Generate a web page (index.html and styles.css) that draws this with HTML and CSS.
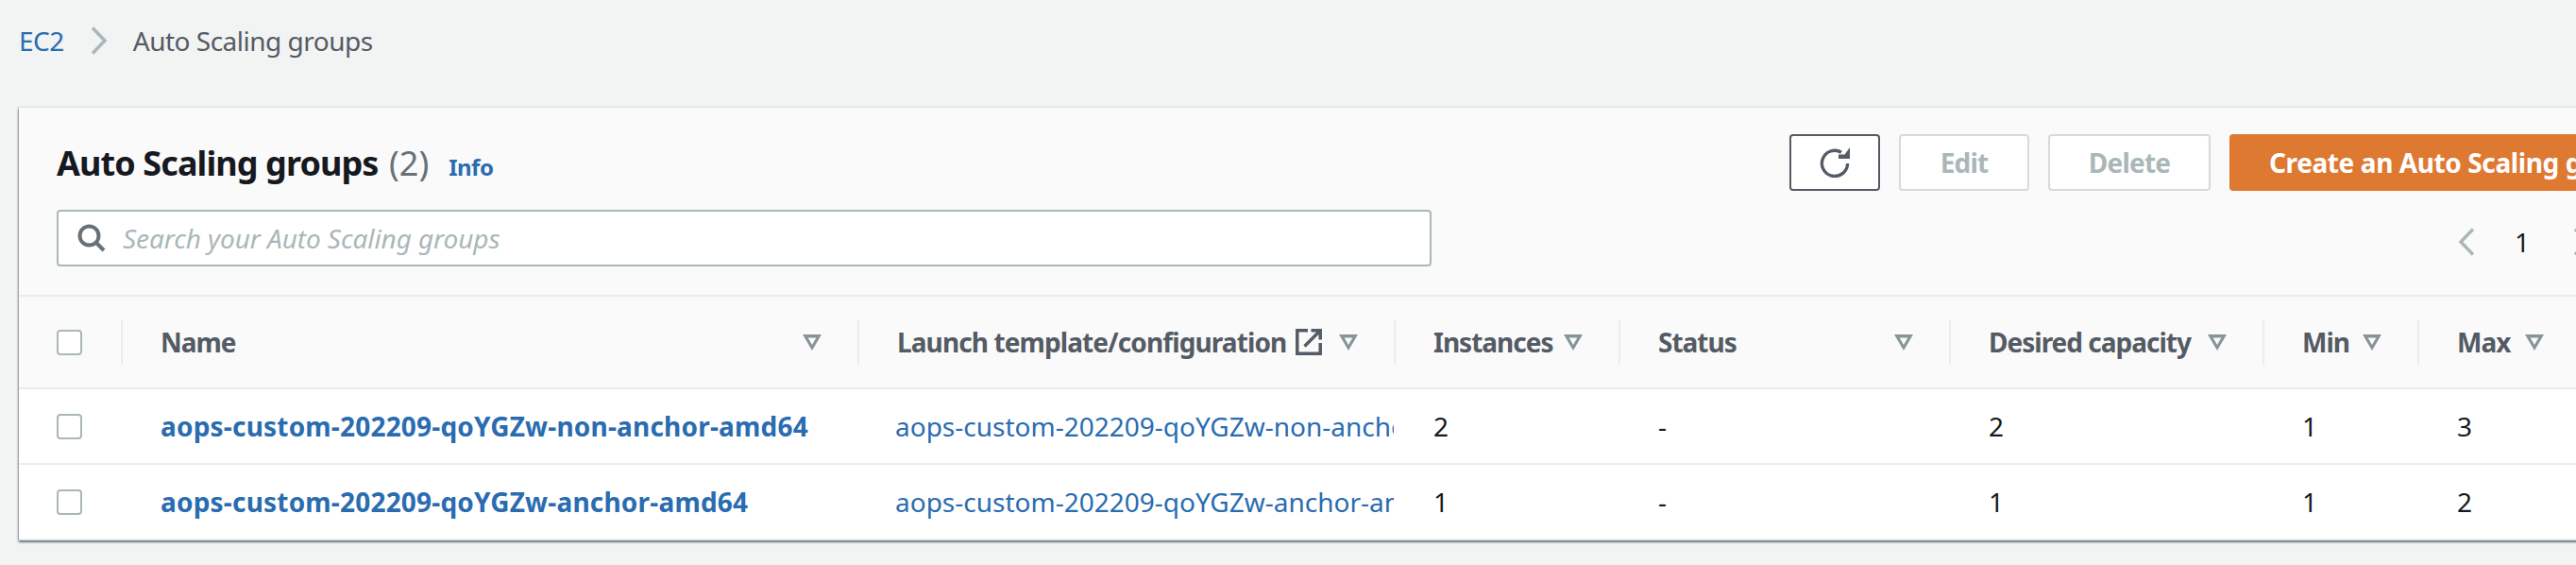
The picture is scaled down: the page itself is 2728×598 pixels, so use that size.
FILE: index.html

```html
<!DOCTYPE html>
<html>
<head>
  <title>Auto Scaling groups</title>
  <link rel="stylesheet" href="styles.css">
</head>
<body>
  <nav class="crumbs">
    <a href="#">EC2</a>
    <svg class="crumb-sep" width="18" height="30" viewBox="0 0 18 30"><path d="M2 1.5 15 15 2 28.5" fill="none" stroke="#aab7b8" stroke-width="3.5"/></svg>
    <span>Auto Scaling groups</span>
  </nav>

  <section class="panel">
    <div class="panel-head">
      <div class="head-left">
        <div class="title-row">
          <h1>Auto Scaling groups <span class="count">(2)</span></h1>
          <a class="info" href="#">Info</a>
        </div>
        <div class="search">
          <svg width="30" height="30" viewBox="0 0 30 30"><circle cx="12.5" cy="12.5" r="10" fill="none" stroke="#687078" stroke-width="4"/><path d="M19.5 19.5 28 28" fill="none" stroke="#687078" stroke-width="4"/></svg>
          <span class="placeholder">Search your Auto Scaling groups</span>
        </div>
      </div>
      <div class="head-right">
        <div class="actions">
          <button class="btn btn-refresh">
            <svg width="32" height="32" viewBox="0 0 32 32"><path d="M23 5.2A13.6 13.6 0 1 0 29.6 17" fill="none" stroke="#545b64" stroke-width="3.4"/><path d="M32 0V12H20V7.5H26.5Z" fill="#545b64"/></svg>
          </button>
          <button class="btn btn-off btn-edit">Edit</button>
          <button class="btn btn-off btn-delete">Delete</button>
          <button class="btn btn-primary">Create an Auto Scaling group</button>
        </div>
        <div class="pager">
          <svg width="18" height="30" viewBox="0 0 18 30"><path d="M16 1.5 3 15 16 28.5" fill="none" stroke="#aab7b8" stroke-width="3.5"/></svg>
          <span class="page-num">1</span>
          <svg width="18" height="30" viewBox="0 0 18 30"><path d="M2 1.5 15 15 2 28.5" fill="none" stroke="#aab7b8" stroke-width="3.5"/></svg>
        </div>
      </div>
    </div>

    <table>
      <colgroup>
        <col class="c-check"><col class="c-name"><col class="c-launch"><col class="c-inst"><col class="c-status"><col class="c-desired"><col class="c-min"><col class="c-max">
      </colgroup>
      <thead>
        <tr>
          <th><div class="th-in th-check"><span class="check"></span></div></th>
          <th><div class="th-in">Name <svg class="sort" width="20" height="17" viewBox="0 0 20 17"><path fill-rule="evenodd" d="M0 0H20L10 17ZM5.6 3.6H14.4L10 11Z" fill="#879596"/></svg></div></th>
          <th><div class="th-in"><span class="th-label">Launch template/configuration <svg class="ext" width="28" height="28" viewBox="0 0 28 28"><path d="M13 1.8H1.8V26.2H26.2V15" fill="none" stroke="#545b64" stroke-width="3.5"/><path d="M16.5 1.8H26.2V11.5M26 2 9.5 18.5" fill="none" stroke="#545b64" stroke-width="3.5"/></svg></span> <svg class="sort" width="20" height="17" viewBox="0 0 20 17"><path fill-rule="evenodd" d="M0 0H20L10 17ZM5.6 3.6H14.4L10 11Z" fill="#879596"/></svg></div></th>
          <th><div class="th-in">Instances <svg class="sort" width="20" height="17" viewBox="0 0 20 17"><path fill-rule="evenodd" d="M0 0H20L10 17ZM5.6 3.6H14.4L10 11Z" fill="#879596"/></svg></div></th>
          <th><div class="th-in">Status <svg class="sort" width="20" height="17" viewBox="0 0 20 17"><path fill-rule="evenodd" d="M0 0H20L10 17ZM5.6 3.6H14.4L10 11Z" fill="#879596"/></svg></div></th>
          <th><div class="th-in">Desired capacity <svg class="sort" width="20" height="17" viewBox="0 0 20 17"><path fill-rule="evenodd" d="M0 0H20L10 17ZM5.6 3.6H14.4L10 11Z" fill="#879596"/></svg></div></th>
          <th><div class="th-in">Min <svg class="sort" width="20" height="17" viewBox="0 0 20 17"><path fill-rule="evenodd" d="M0 0H20L10 17ZM5.6 3.6H14.4L10 11Z" fill="#879596"/></svg></div></th>
          <th><div class="th-in th-last">Max <svg class="sort" width="20" height="17" viewBox="0 0 20 17"><path fill-rule="evenodd" d="M0 0H20L10 17ZM5.6 3.6H14.4L10 11Z" fill="#879596"/></svg></div></th>
        </tr>
      </thead>
      <tbody>
        <tr>
          <td class="td-check"><span class="check"></span></td>
          <td><a class="name-link" href="#">aops-custom-202209-qoYGZw-non-anchor-amd64</a></td>
          <td class="td-launch"><div class="clip"><a href="#">aops-custom-202209-qoYGZw-non-anchor-amd64</a></div></td>
          <td>2</td>
          <td>-</td>
          <td>2</td>
          <td>1</td>
          <td>3</td>
        </tr>
        <tr>
          <td class="td-check"><span class="check"></span></td>
          <td><a class="name-link" href="#">aops-custom-202209-qoYGZw-anchor-amd64</a></td>
          <td class="td-launch"><div class="clip"><a href="#">aops-custom-202209-qoYGZw-anchor-amd64</a></div></td>
          <td>1</td>
          <td>-</td>
          <td>1</td>
          <td>1</td>
          <td>2</td>
        </tr>
      </tbody>
    </table>
  </section>
</body>
</html>
```

FILE: styles.css

```css
html, body { margin: 0; height: 100%; overflow: hidden; }
body { background: #f2f3f3; color: #16191f; font-family: "Noto Sans", "Liberation Sans", sans-serif; font-size: 28px; letter-spacing: -0.5px; }
a { color: #2a6cb0; text-decoration: none; }

.crumbs { height: 86px; padding-left: 20px; display: flex; align-items: center; color: #545b64; }
.crumb-sep { margin: 0 27px 0 28px; }

.panel { margin-left: 20px; margin-top: 28px; width: 2800px; background: #fff; box-shadow: 0 2px 2px rgba(0, 28, 36, .55), -1px 0 2px rgba(0, 28, 36, .3); }
.panel-head { height: 198px; background: #fafafa; border-bottom: 2px solid #eaeded; display: flex; padding-left: 40px; }

.head-left { width: 1456px; margin-right: 379px; flex: none; }
.title-row { display: flex; align-items: baseline; height: 108px; padding-top: 37px; box-sizing: border-box; }
h1 { margin: 0; font-size: 36px; font-weight: 700; line-height: 44px; white-space: nowrap; letter-spacing: -0.9px; }
.count { font-weight: 400; color: #687078; letter-spacing: 0; margin-left: 3px; }
.info { font-size: 24px; font-weight: 700; margin-left: 21px; }

.search { height: 60px; box-sizing: border-box; background: #fff; border: 2px solid #aab7b8; border-radius: 4px; display: flex; align-items: center; padding-left: 20px; }
.placeholder { margin-left: 18px; font-style: italic; color: #aab7b8; letter-spacing: -0.1px; }

.head-right { flex: none; padding-top: 28px; }
.actions { display: flex; gap: 20px; white-space: nowrap; }
.btn { height: 60px; box-sizing: border-box; border-radius: 4px; font-family: inherit; font-size: 28px; font-weight: 700; letter-spacing: -0.8px; background: #fff; padding: 0; }
.btn-refresh { width: 96px; border: 2px solid #545b64; display: flex; align-items: center; justify-content: center; }
.btn-off { border: 2px solid #d5dbdb; color: #aab7b8; }
.btn-edit { width: 138px; }
.btn-delete { width: 172px; }
.btn-primary { border: 0; background: #de7932; color: #fff; padding: 0 42px; letter-spacing: -0.4px; }

.pager { display: flex; align-items: center; margin-left: 708px; margin-top: 35px; }
.page-num { margin-left: 42px; margin-right: 46px; }

table { border-collapse: separate; border-spacing: 0; table-layout: fixed; width: 2780px; }
.c-check { width: 110px; }
.c-name { width: 780px; }
.c-launch { width: 568px; }
.c-inst { width: 238px; }
.c-status { width: 350px; }
.c-desired { width: 332px; }
.c-min { width: 164px; }
.c-max { width: 238px; }

th { height: 98px; box-sizing: border-box; padding: 0; background: #fafafa; border-bottom: 2px solid #eaeded; font-weight: 700; color: #545b64; text-align: left; letter-spacing: -1px; }
.th-in { height: 48px; box-sizing: border-box; border-right: 2px solid #eaeded; padding: 0 38px 0 40px; display: flex; align-items: center; justify-content: space-between; white-space: nowrap; }
.th-check { padding: 0 0 0 40px; }
.th-last { border-right: 0; justify-content: flex-start; gap: 16px; }
.th-label { display: flex; align-items: center; gap: 10px; letter-spacing: -0.9px; }
.ext { flex: none; }
.sort { flex: none; }

td { height: 80px; box-sizing: border-box; padding: 0 0 0 40px; border-bottom: 2px solid #eaeded; white-space: nowrap; }
.name-link { font-weight: 700; letter-spacing: 0.2px; }
.td-launch { padding-left: 38px; padding-right: 2px; letter-spacing: 0; }
.clip { overflow: hidden; }

.check { display: block; width: 27px; height: 27px; box-sizing: border-box; background: #fff; border: 2px solid #aab7b8; border-radius: 4px; }
```
